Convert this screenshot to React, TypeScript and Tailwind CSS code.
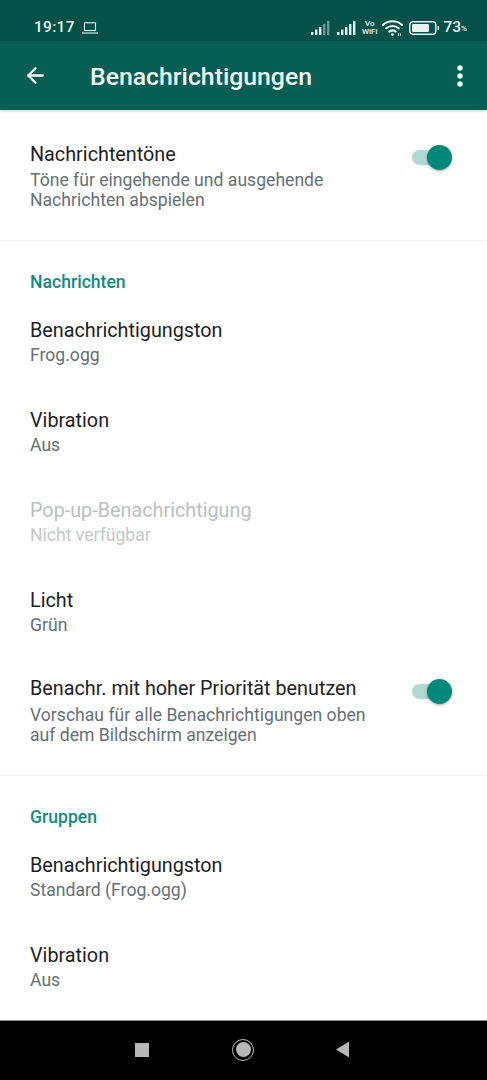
import React from "react";
import { ArrowLeft } from "lucide-react";

function Toggle() {
  return (
    <div className="relative mr-[41px] mt-[8px] h-[15px] w-[34px] shrink-0 rounded-full bg-[#b2d8d3]">
      <div className="absolute right-[-6px] top-[-5px] h-[25px] w-[25px] rounded-full bg-[#00897b] shadow-[0_1px_3px_rgba(0,0,0,0.35)]" />
    </div>
  );
}

function Row({ title, sub, disabled }: { title: string; sub: string; disabled?: boolean }) {
  return (
    <div className="flex h-[90px] flex-col justify-center pl-[30px]">
      <div className={`text-[19.8px] leading-[26px] ${disabled ? "text-[#bcc0c2]" : "text-[#1c2226]"}`}>{title}</div>
      <div className={`text-[17.6px] leading-[23px] ${disabled ? "text-[#c4c8ca]" : "text-[#667076]"}`}>{sub}</div>
    </div>
  );
}

function ToggleRow({ title, lines, gap }: { title: string; lines: string[]; gap: string }) {
  return (
    <div className="flex items-start justify-between pl-[30px]">
      <div>
        <div className="text-[19.8px] leading-[26px] text-[#1c2226]">{title}</div>
        <div className={`${gap} text-[17.6px] leading-[20px] text-[#667076]`}>
          {lines.map((l) => (
            <div key={l}>{l}</div>
          ))}
        </div>
      </div>
      <Toggle />
    </div>
  );
}

function Section({ label }: { label: string }) {
  return <div className="pt-[31px] pl-[30px] text-[17.6px] font-medium leading-[20px] text-[#128c7e]">{label}</div>;
}

function Signal({ dim }: { dim?: boolean }) {
  return (
    <svg width="19" height="14" viewBox="0 0 19 14" fill="#e8f2f0">
      <rect x="0" y="11" width="2.4" height="3" />
      <rect x="4" y="8.5" width="2.4" height="5.5" />
      <rect x="8" y="6" width="2.4" height="8" />
      <rect x="12" y="3" width="2.4" height="11" opacity={dim ? 0.45 : 1} />
      <rect x="16" y="0" width="2.4" height="14" opacity={dim ? 0.45 : 1} />
    </svg>
  );
}

function StatusBar() {
  return (
    <div className="flex h-[41px] items-center bg-[#04514a] pl-[34px] pr-[20px] pt-[14px] text-[#e8f2f0]">
      <span className="text-[15.5px] font-medium leading-none tracking-[0.3px]">19:17</span>
      <svg className="ml-[7px]" width="16" height="12" viewBox="0 0 16 12" fill="none" stroke="#e8f2f0" strokeWidth="1.1">
        <rect x="2.5" y="0.8" width="11" height="7.7" />
        <path d="M0 11h16" />
      </svg>
      <div className="ml-auto flex items-center">
        <Signal dim />
        <div className="ml-[7px]">
          <Signal />
        </div>
        <div className="ml-[6px] flex flex-col items-center text-[8px] font-medium leading-[8px]">
          <span>Vo</span>
          <span>WiFi</span>
        </div>
        <svg className="ml-[5px]" width="21" height="18" viewBox="0 0 20 17" fill="none" stroke="#e8f2f0" strokeWidth="2" strokeLinecap="round">
          <path d="M1 5.5C6 1 14 1 19 5.5" />
          <path d="M4 8.8C7.5 5.8 12.5 5.8 16 8.8" />
          <path d="M7 12C8.8 10.6 11.2 10.6 13 12" />
          <circle cx="10" cy="14.8" r="1.3" fill="#e8f2f0" stroke="none" />
          <path d="M15.5 13.5v2.5M17.5 13.5v2.5" strokeWidth="0.9" strokeLinecap="butt" />
        </svg>
        <svg className="ml-[6px]" width="31" height="14" viewBox="0 0 31 14" fill="none">
          <rect x="0.8" y="0.8" width="26" height="12.4" rx="3" stroke="#e8f2f0" strokeWidth="1.4" />
          <rect x="3" y="3" width="17" height="8" rx="1" fill="#e8f2f0" />
          <rect x="28.6" y="5" width="1.4" height="4" fill="#e8f2f0" />
        </svg>
        <span className="ml-[3px] text-[15.5px] font-medium leading-none">73</span>
        <span className="mt-[3px] text-[8px] font-medium leading-none">%</span>
      </div>
    </div>
  );
}

function Toolbar() {
  return (
    <div className="relative z-10 flex h-[69px] items-center bg-[#075e54] pl-[23px] pr-[24px] text-[#f2f8f7] shadow-[0_1px_3px_rgba(0,0,0,0.2)]">
      <ArrowLeft size={25} strokeWidth={2.2} />
      <div className="ml-[42px] mt-[3px] text-[24.8px] font-medium leading-none">Benachrichtigungen</div>
      <svg className="ml-auto" width="6" height="22" viewBox="0 0 6 22" fill="#f2f8f7">
        <circle cx="3" cy="3" r="2.7" />
        <circle cx="3" cy="11" r="2.7" />
        <circle cx="3" cy="19" r="2.7" />
      </svg>
    </div>
  );
}

function NavBar() {
  return (
    <div className="flex h-[59px] shrink-0 items-center bg-black pb-[2px] pl-[135px] pr-[137px]">
      <div className="h-[14px] w-[14px] bg-[#b8b8b8]" />
      <div className="ml-[83px] flex h-[22px] w-[22px] items-center justify-center rounded-full border-[1.5px] border-[#b8b8b8]">
        <div className="h-[15px] w-[15px] rounded-full bg-[#b8b8b8]" />
      </div>
      <svg className="ml-auto" width="14" height="17" viewBox="0 0 15 17" fill="#b8b8b8">
        <path d="M14 0v17L0 8.5z" />
      </svg>
    </div>
  );
}

export default function App() {
  return (
    <div className="flex h-[1080px] w-[487px] flex-col overflow-hidden bg-white font-['Roboto',sans-serif]">
      <StatusBar />
      <Toolbar />
      <div className="min-h-0 flex-1 overflow-hidden">
        <div className="pt-[32px] pb-[30px]">
          <ToggleRow title="Nachrichtentöne" gap="mt-[2px]" lines={["Töne für eingehende und ausgehende", "Nachrichten abspielen"]} />
        </div>
        <div className="h-px bg-[#eeeeee]" />
        <Section label="Nachrichten" />
        <div className="h-[5px]" />
        <Row title="Benachrichtigungston" sub="Frog.ogg" />
        <Row title="Vibration" sub="Aus" />
        <Row title="Pop-up-Benachrichtigung" sub="Nicht verfügbar" disabled />
        <Row title="Licht" sub="Grün" />
        <div className="pt-[19px] pb-[30px]">
          <ToggleRow title="Benachr. mit hoher Priorität benutzen" gap="mt-[3px]" lines={["Vorschau für alle Benachrichtigungen oben", "auf dem Bildschirm anzeigen"]} />
        </div>
        <div className="h-px bg-[#eeeeee]" />
        <Section label="Gruppen" />
        <div className="h-[5px]" />
        <Row title="Benachrichtigungston" sub="Standard (Frog.ogg)" />
        <Row title="Vibration" sub="Aus" />
      </div>
      <div className="h-[1px] shrink-0 bg-[#8a8a8a]" />
      <NavBar />
    </div>
  );
}
